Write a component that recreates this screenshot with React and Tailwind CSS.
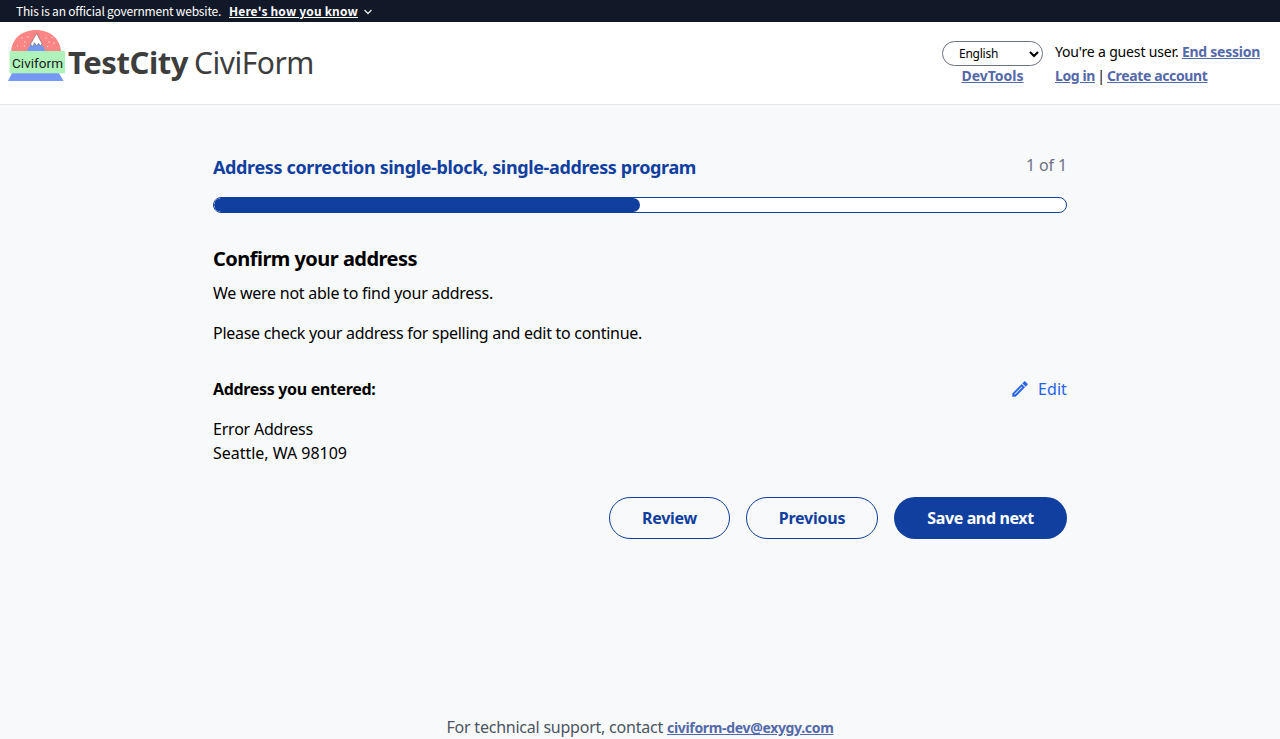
const link = "font-bold text-sm leading-6 text-[#5469a9] underline";

function Logo() {
  return (
    <svg className="mt-px h-[52px] w-[58px] shrink-0" viewBox="0 0 58 52">
      <path d="M3 23C3 9 14 0 28 0S53 9 53 23Z" fill="#fb8484" />
      <path d="M18 22 28.5 4.500 38 22Z" fill="#7599f2" />
      <path
        d="M28.500 3.500 22.500 14 24.800 16.500 26.500 12.800 28.800 16 30.500 13.300 32.700 16 34 13.500Z"
        fill="#fff"
        stroke="#555"
        strokeWidth="0.500"
      />
      <g fill="#fff" opacity="0.75">
        <circle cx="20" cy="7" r="0.700" />
        <circle cx="14" cy="8" r="0.700" />
        <circle cx="17" cy="12" r="0.700" />
        <circle cx="9.500" cy="16" r="0.700" />
        <circle cx="16.500" cy="16" r="0.700" />
        <circle cx="38" cy="8" r="0.700" />
        <circle cx="44" cy="7.500" r="0.700" />
        <circle cx="41" cy="12" r="0.700" />
        <circle cx="46" cy="13" r="0.700" />
        <circle cx="39.500" cy="16.500" r="0.700" />
      </g>
      <path d="M4 43H51L55.500 51H0Z" fill="#7599f2" />
      <rect x="1.500" y="21" width="55.500" height="22.300" fill="#aff3bb" />
      <text x="4" y="37.500" fontSize="13.500" textLength="51" fill="#1b1b1b" className="font-['Roboto',sans-serif]">
        Civiform
      </text>
    </svg>
  );
}

function Banner() {
  return (
    <div className="flex h-[22px] items-center bg-[#111827] pl-4 font-['Noto_Sans_CJK_SC',sans-serif] text-xs leading-4 text-white">
      <span className="w-[205px] whitespace-nowrap tracking-[-0.2px]">This is an official government website.</span>
      <a className="ml-2 w-[129px] whitespace-nowrap font-bold tracking-[0.16px] underline">Here's how you know</a>
      <svg className="ml-1.5 mt-px h-2 w-2" viewBox="0 0 8 8" fill="none" stroke="#e5e7eb" strokeWidth="1.300">
        <path d="M0.500 2 4 5.500 7.500 2" />
      </svg>
    </div>
  );
}

function Header() {
  return (
    <header className="flex h-[83px] justify-between border-b border-[#e5e7eb] bg-white pl-2 pr-5">
      <div className="flex pt-[7px]">
        <Logo />
        <div className="ml-0.5 mt-[13px] flex items-baseline whitespace-nowrap text-[#3d3d3d]">
          <span className="w-[126px] text-[31px] font-bold leading-10 tracking-[-0.45px]">TestCity</span>
          <span className="text-[30px] font-normal leading-10 tracking-[-0.5px]">CiviForm</span>
        </div>
      </div>
      <div className="flex pt-[19px] text-sm leading-6">
        <div className="flex w-[101px] flex-col items-center">
          <div className="flex h-[25px] w-full shrink-0 items-center justify-between rounded-full border border-[#6b7280] bg-white pl-4 pr-[3px] text-xs tracking-[-0.25px]">
            English
            <svg className="h-2.5 w-2.5" viewBox="0 0 10 10" fill="none" stroke="#000" strokeWidth="2">
              <path d="M1 3 5 7 9 3" />
            </svg>
          </div>
          <a className={`${link} -mt-0.5`}>DevTools</a>
        </div>
        <div className="ml-3 w-[205px] whitespace-nowrap -mt-px">
          <div className="flex justify-between">
            <span className="tracking-[-0.16px]">You're a guest user.</span>
            <a className={`${link} tracking-[-0.26px]`}>End session</a>
          </div>
          <div className="flex">
            <a className={`${link} w-10 tracking-[-0.39px]`}>Log in</a>
            <span className="w-3 text-center">|</span>
            <a className={`${link} tracking-[-0.37px]`}>Create account</a>
          </div>
        </div>
      </div>
    </header>
  );
}

export default function App() {
  return (
    <div className="flex h-[739px] flex-col overflow-hidden bg-[#f8f9fb] font-['Noto_Sans','Open_Sans',sans-serif] text-base text-black">
      <Banner />
      <Header />
      <main className="mx-auto w-[854px]">
        <div className="mt-12 flex h-11 justify-between">
          <h1 className="text-lg font-bold leading-7 tracking-[-0.362px] text-[#113f9f]">
            Address correction single-block, single-address program
          </h1>
          <span className="leading-6 tracking-[-0.13px] text-[#6b7280]">1 of 1</span>
        </div>
        <div className="h-4 overflow-hidden rounded-full border border-[#113f9f] bg-white">
          <div className="h-full w-1/2 rounded-full bg-[#113f9f]" />
        </div>
        <h2 className="mt-8 text-xl font-bold leading-7 tracking-[-0.528px]">Confirm your address</h2>
        <p className="mt-2 leading-6 tracking-[-0.255px]">We were not able to find your address.</p>
        <p className="mt-4 leading-6 tracking-[-0.283px]">Please check your address for spelling and edit to continue.</p>
        <div className="mt-8 flex justify-between leading-6">
          <h3 className="font-bold tracking-[-0.33px]">Address you entered:</h3>
          <a className="flex items-center text-[#2563eb]">
            <svg className="mr-2 h-5 w-5" viewBox="0 0 24 24" fill="currentColor">
              <path d="M14.060 9.020l.92.92L5.920 19H5v-.92l9.060-9.060M17.660 3c-.25 0-.51.1-.7.29l-1.830 1.830 3.750 3.750 1.830-1.830c.39-.39.39-1.020 0-1.410l-2.340-2.340c-.2-.2-.45-.29-.71-.29zm-3.600 3.190L3 17.250V21h3.750L17.810 9.940l-3.750-3.750z" stroke="currentColor" strokeWidth="0.500" />
            </svg>
            <span className="tracking-[0.09px]">Edit</span>
          </a>
        </div>
        <address className="mt-4 not-italic leading-6">
          <div className="tracking-[-0.215px]">Error Address</div>
          <div className="tracking-[-0.02px]">Seattle, WA 98109</div>
        </address>
        <div className="mt-8 flex justify-end gap-4 font-bold text-[#113f9f]">
          <button className="h-[42px] w-[121px] rounded-full border border-[#113f9f] tracking-[-0.26px]">Review</button>
          <button className="h-[42px] w-[132px] rounded-full border border-[#113f9f] tracking-[-0.23px]">Previous</button>
          <button className="h-[42px] w-[173px] rounded-full bg-[#113f9f] tracking-[-0.37px] text-white">Save and next</button>
        </div>
      </main>
      <footer className="mt-auto flex h-6 items-baseline justify-center whitespace-nowrap leading-6 text-[#4b5563]">
        <span className="mr-1 tracking-[-0.226px]">For technical support, contact</span>
        <a className={`${link} tracking-[-0.325px]`}>civiform-dev@exygy.com</a>
      </footer>
    </div>
  );
}
